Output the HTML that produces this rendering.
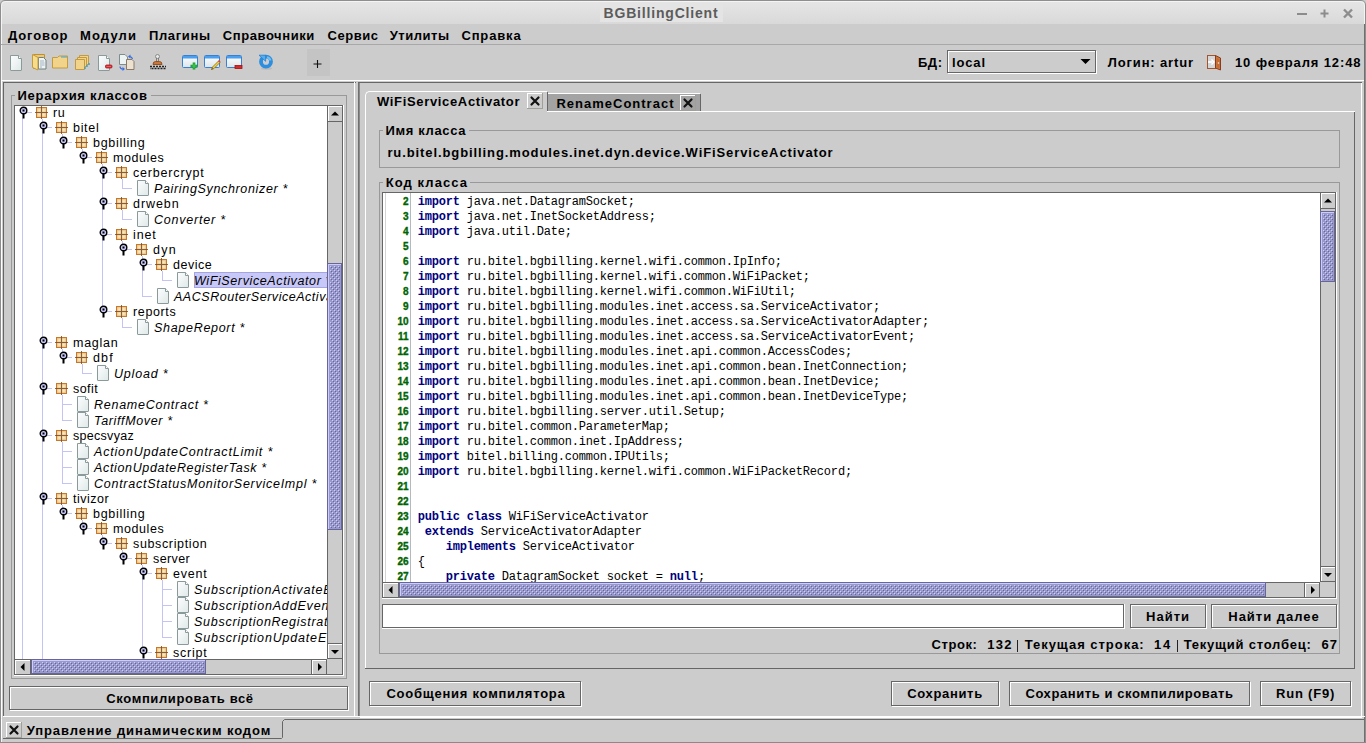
<!DOCTYPE html><html><head><meta charset="utf-8"><title>BGBillingClient</title><style>html,body{margin:0;padding:0;width:1366px;height:743px;overflow:hidden;background:#cccccc;}.a{position:absolute;display:block;}.t{white-space:pre;font-kerning:none;}svg.a{overflow:visible}</style></head><body><svg width="0" height="0" style="position:absolute"><defs><pattern id="bump" width="4" height="4" patternUnits="userSpaceOnUse"><rect x="0" y="0" width="1" height="1" fill="#ccccff"/><rect x="1" y="1" width="1" height="1" fill="#666699"/><rect x="2" y="2" width="1" height="1" fill="#ccccff"/><rect x="3" y="3" width="1" height="1" fill="#666699"/></pattern><linearGradient id="gdoc" x1="0" y1="0" x2="1" y2="1"><stop offset="0" stop-color="#fdfefe"/><stop offset="1" stop-color="#dfe8e8"/></linearGradient><radialGradient id="gpk"><stop offset="0" stop-color="#fdf0c0"/><stop offset="1" stop-color="#e8c690"/></radialGradient><linearGradient id="gwin" x1="0" y1="0" x2="0" y2="1"><stop offset="0" stop-color="#fff"/><stop offset="1" stop-color="#dde4ea"/></linearGradient></defs></svg><div class="a" style="left:0px;top:0px;width:1366px;height:743px;background:#cccccc;"></div>
<div class="a" style="left:0px;top:0px;width:1366px;height:24px;background:linear-gradient(#e6e6e6,#d9d9d9);border-radius:5px 5px 0 0;"></div>
<svg class="a" style="left:0;top:0" width="1366" height="743"><path d="M1.5 743V6Q1.5 1.5 6 1.5H1360Q1364.5 1.5 1364.5 6V743" stroke="#f4f4f4" fill="none"/><path d="M0.5 743V5Q0.5 0.5 5 0.5H1361Q1365.5 0.5 1365.5 5V743" stroke="#8e8e8e" fill="none"/></svg>
<div class="a" style="left:600px;top:4px;width:123px;height:18px;background:#e4e4e4;"></div>
<span id="t1" class="a t" style="top:3.65px;font:normal bold 14px/18px 'Liberation Sans', sans-serif;color:#5c5c5c;letter-spacing:0.816px;left:661px;transform:translateX(-50%);">BGBillingClient</span>
<svg class="a" style="left:1290px;top:6px" width="70" height="14"><path d="M7 8h10" stroke="#8c8c8c" stroke-width="2"/><path d="M34.5 3.5v8M30.5 7.5h8" stroke="#8c8c8c" stroke-width="2"/><path d="M54 3.5l8 8M62 3.5l-8 8" stroke="#8c8c8c" stroke-width="2.4"/></svg>
<div class="a" style="left:1px;top:44px;width:1364px;height:1px;background:#a8a8a8;"></div>
<span id="t2" class="a t" style="top:26.50px;font:normal bold 13px/17px 'Liberation Sans', sans-serif;color:#000;letter-spacing:0.875px;left:8px;">Договор</span>
<span id="t3" class="a t" style="top:26.50px;font:normal bold 13px/17px 'Liberation Sans', sans-serif;color:#000;letter-spacing:1.134px;left:80px;">Модули</span>
<span id="t4" class="a t" style="top:26.50px;font:normal bold 13px/17px 'Liberation Sans', sans-serif;color:#000;letter-spacing:0.633px;left:149px;">Плагины</span>
<span id="t5" class="a t" style="top:26.50px;font:normal bold 13px/17px 'Liberation Sans', sans-serif;color:#000;letter-spacing:0.575px;left:222.8px;">Справочники</span>
<span id="t6" class="a t" style="top:26.50px;font:normal bold 13px/17px 'Liberation Sans', sans-serif;color:#000;letter-spacing:0.504px;left:327.6px;">Сервис</span>
<span id="t7" class="a t" style="top:26.50px;font:normal bold 13px/17px 'Liberation Sans', sans-serif;color:#000;letter-spacing:0.521px;left:389.7px;">Утилиты</span>
<span id="t8" class="a t" style="top:26.50px;font:normal bold 13px/17px 'Liberation Sans', sans-serif;color:#000;letter-spacing:0.860px;left:461.4px;">Справка</span>
<svg class="a" style="left:6px;top:54px;" width="16" height="16" viewBox="0 0 16 16"><path d="M4.5 1.5h8l3 3v11.5q0 .5-.5.5h-10q-.5 0-.5-.5z" fill="url(#gdoc)" stroke="#8a9a9a" stroke-width="1"/><path d="M12.5 1.5v3h3" fill="#fff" stroke="#8a9a9a" stroke-width="1"/></svg>
<svg class="a" style="left:31px;top:54px;" width="16" height="16" viewBox="0 0 16 16"><path d="M2.5 0.5h11v14h-11z" fill="#efc870" stroke="#c09030"/><path d="M7.5 3.5h5l2.5 2.5v9h-7.5z" fill="#eef4f4" stroke="#6f8080"/><path d="M9 7h4M9 9h4.5M9 11h4.5M9 13h2" stroke="#9ab" stroke-width="0.9"/><path d="M1.5 0.5l5.5 3v12.5l-5.5 -2.5z" fill="#f6dc8c" stroke="#c39a3e"/></svg>
<svg class="a" style="left:52px;top:54px;" width="16" height="16" viewBox="0 0 16 16"><path d="M0.5 3.5h5l1.5 -1.5h8.5v12h-15z" fill="#f2d38a" stroke="#c39a3e"/><path d="M9 3h6" stroke="#3aa7e0" stroke-width="1"/></svg>
<svg class="a" style="left:74px;top:54px;" width="16" height="16" viewBox="0 0 16 16"><path d="M5.5 1.5h9v9h-9z" fill="#f2d38a" stroke="#c39a3e"/><path d="M3.5 3.5h9v9h-9z" fill="#f2d38a" stroke="#c39a3e"/><path d="M1.5 5.5h9v10h-9z" fill="#f2d38a" stroke="#c39a3e"/><path d="M11 13v2M13 11v2M15 9v2" stroke="#2a9fd8" stroke-width="1.3"/></svg>
<svg class="a" style="left:94px;top:54px;" width="16" height="16" viewBox="0 0 16 16"><path d="M4.5 1.5h8l3 3v11.5q0 .5-.5.5h-10q-.5 0-.5-.5z" fill="url(#gdoc)" stroke="#8a9a9a" stroke-width="1"/><path d="M12.5 1.5v3h3" fill="#fff" stroke="#8a9a9a" stroke-width="1"/><rect x="11.5" y="11" width="6.5" height="3" rx="1" fill="#d8303a" stroke="#a81820" stroke-width="0.8"/><path d="M12.5 12.5h4.5" stroke="#f08080" stroke-width="0.6"/></svg>
<svg class="a" style="left:118px;top:54px;" width="16" height="16" viewBox="0 0 16 16"><path d="M1.5 0.5h5.5l2.5 2.5v7.5h-8z" fill="#eef4f4" stroke="#7d8c8c"/><path d="M8.5 5.5h5.5l2 2v8h-7.5z" fill="#ece2d2" stroke="#8a7a68"/><path d="M11 2.5c1.5 0 3 0.5 3.5 2.5" stroke="#3a6ee0" fill="none" stroke-width="1.2"/><path d="M10 2.5l2.5 -2v4z" fill="#3a6ee0"/><path d="M2 12.5c0 1.5 1.5 2.5 3 2.5" stroke="#3a6ee0" fill="none" stroke-width="1.2"/><path d="M7 15l-2.5 -2v4z" fill="#3a6ee0"/></svg>
<svg class="a" style="left:150px;top:54px;" width="16" height="16" viewBox="0 0 16 16"><circle cx="7.5" cy="2.5" r="2" fill="#e8e8e8" stroke="#8a8a8a"/><path d="M6.5 4v3M8.5 4v3" stroke="#777" stroke-width="0.9"/><path d="M3 10.5q0-3 2.5-3h4q2.5 0 2.5 3z" fill="#c8763a" stroke="#8a4a1a" stroke-width="0.9"/><path d="M0 12.5h16" stroke="#222" stroke-width="1.3" stroke-dasharray="2 1"/><path d="M0 14.5h16" stroke="#222" stroke-width="1.3" stroke-dasharray="2 1" stroke-dashoffset="1.5"/></svg>
<svg class="a" style="left:182px;top:54px;" width="16" height="16" viewBox="0 0 16 16"><rect x="0.5" y="1.5" width="15" height="12" rx="1" fill="url(#gwin)" stroke="#3b7fd0"/><rect x="1" y="2" width="14" height="2.5" fill="#4aa0f0"/><path d="M12 8.5v7M8.5 12h7" stroke="#1f9a2a" stroke-width="2.6"/><path d="M12 9.5v5M9.5 12h5" stroke="#3cd048" stroke-width="1.2"/></svg>
<svg class="a" style="left:204px;top:54px;" width="16" height="16" viewBox="0 0 16 16"><rect x="0.5" y="1.5" width="15" height="12" rx="1" fill="url(#gwin)" stroke="#3b7fd0"/><rect x="1" y="2" width="14" height="2.5" fill="#4aa0f0"/><path d="M7.5 15.5l1-2.5 6-6 1.5 1.5-6 6z" fill="#f0d040" stroke="#7a6010" stroke-width="0.7"/><path d="M14.5 6.5l1.5 1.5" stroke="#e04040" stroke-width="1.6"/><path d="M7.5 15.5l0.6-1.2 0.6 0.6z" fill="#111"/></svg>
<svg class="a" style="left:226px;top:54px;" width="16" height="16" viewBox="0 0 16 16"><rect x="0.5" y="1.5" width="15" height="12" rx="1" fill="url(#gwin)" stroke="#3b7fd0"/><rect x="1" y="2" width="14" height="2.5" fill="#4aa0f0"/><rect x="9" y="11.5" width="7" height="3" fill="#d42a2a" stroke="#a01010" stroke-width="0.8"/></svg>
<svg class="a" style="left:258px;top:54px;" width="16" height="16" viewBox="0 0 16 16"><ellipse cx="8.5" cy="14.5" rx="5.5" ry="1.2" fill="#999" opacity="0.35"/><circle cx="8" cy="7.7" r="5" fill="none" stroke="#2b8ee0" stroke-width="3.8"/><path d="M9 3.2A4.6 4.6 0 0 1 12.5 6.5" fill="none" stroke="#8ccaf0" stroke-width="2" opacity="0.8"/><path d="M1 1.2h6.6v6.1z" fill="#52b0f0" stroke="#2a80d0" stroke-width="0.8"/></svg>
<div class="a" style="left:307px;top:49px;width:23px;height:27px;background:#c4c4c4;"></div>
<svg class="a" style="left:312px;top:58px" width="12" height="12"><path d="M5.5 2v8M1.5 6h8" stroke="#111" stroke-width="1.1"/></svg>
<span id="t9" class="a t" style="top:53.50px;font:normal bold 13px/17px 'Liberation Sans', sans-serif;color:#000;letter-spacing:0.531px;left:918px;">БД:</span>
<div class="a" style="left:947px;top:50px;width:150px;height:24px;background:#cccccc;"></div>
<div class="a" style="left:948px;top:51px;width:149px;height:1px;background:#ffffff;"></div>
<div class="a" style="left:948px;top:73px;width:149px;height:1px;background:#ffffff;"></div>
<div class="a" style="left:948px;top:51px;width:1px;height:23px;background:#ffffff;"></div>
<div class="a" style="left:1096px;top:51px;width:1px;height:23px;background:#ffffff;"></div>
<div class="a" style="left:947px;top:50px;width:149px;height:1px;background:#666666;"></div>
<div class="a" style="left:947px;top:72px;width:149px;height:1px;background:#666666;"></div>
<div class="a" style="left:947px;top:50px;width:1px;height:23px;background:#666666;"></div>
<div class="a" style="left:1095px;top:50px;width:1px;height:23px;background:#666666;"></div>
<span id="t10" class="a t" style="top:53.50px;font:normal bold 13px/17px 'Liberation Sans', sans-serif;color:#000;letter-spacing:0.844px;left:952px;">local</span>
<span id="t11" class="a t" style="top:53.50px;font:normal bold 13px/17px 'Liberation Sans', sans-serif;color:#000;letter-spacing:0.846px;left:1107.8px;">Логин: artur</span>
<svg class="a" style="left:1206px;top:54px;" width="16" height="16" viewBox="0 0 16 16"><rect x="1.5" y="1.5" width="8" height="13" fill="#d6d6d6" stroke="#a4532a"/><path d="M2 8h4.5" stroke="#fff" stroke-width="1.6"/><path d="M5.5 5.5l2.5 2.5-2.5 2.5" stroke="#fff" fill="none" stroke-width="1.4"/><path d="M9.5 1.5l5 2.5v12l-5-2z" fill="#d0783c" stroke="#8b3a1a"/><path d="M11.2 4v9.5M12.8 5v9" stroke="#b05a28" stroke-width="0.6"/><circle cx="12.5" cy="9" r="0.8" fill="#eee"/></svg>
<span id="t12" class="a t" style="top:53.50px;font:normal bold 13px/17px 'Liberation Sans', sans-serif;color:#000;letter-spacing:0.875px;left:1235px;">10 февраля 12:48</span>
<div class="a" style="left:1px;top:80px;width:1364px;height:1px;background:#ffffff;"></div>
<div class="a" style="left:3px;top:82px;width:353px;height:1px;background:#666666;"></div>
<div class="a" style="left:3px;top:82px;width:1px;height:635px;background:#666666;"></div>
<div class="a" style="left:3px;top:716px;width:352px;height:1px;background:#ffffff;"></div>
<div class="a" style="left:354px;top:82px;width:1px;height:635px;background:#ffffff;"></div>
<div class="a" style="left:1px;top:80px;width:1px;height:638px;background:#ffffff;"></div>
<div class="a" style="left:11px;top:95px;width:336px;height:1px;background:#999999;"></div>
<div class="a" style="left:11px;top:678px;width:336px;height:1px;background:#999999;"></div>
<div class="a" style="left:11px;top:95px;width:1px;height:584px;background:#999999;"></div>
<div class="a" style="left:346px;top:95px;width:1px;height:584px;background:#999999;"></div>
<div class="a" style="left:14.5px;top:94px;width:136.0px;height:3px;background:#cccccc;"></div>
<span id="t13" class="a t" style="top:86.50px;font:normal bold 13px/17px 'Liberation Sans', sans-serif;color:#000;letter-spacing:0.734px;left:17.5px;">Иерархия классов</span>
<div class="a" style="left:15px;top:106px;width:312px;height:553px;background:#ffffff;"></div>
<div class="a" style="left:15px;top:106px;width:312px;height:553px;overflow:hidden">
<svg class="a" style="left:-15px;top:-106px" width="400" height="700"><path d="M42.5 119V700 M27 112.5H32 M62.5 134V142 M47 127.5H52 M82.5 149V157 M67 142.5H72 M102.5 164V311 M87 157.5H92 M122.5 179V188.5 M107 172.5H112 M122 188.5H132 M122.5 210V219.5 M107 203.5H112 M122 219.5H132 M122.5 241V249 M107 234.5H112 M142.5 256V296.5 M127 249.5H132 M162.5 271V280.5 M147 264.5H152 M162 280.5H172 M142 296.5H152 M122.5 318V327.5 M107 311.5H112 M122 327.5H132 M62.5 349V357 M47 342.5H52 M82.5 364V373.5 M67 357.5H72 M82 373.5H92 M62.5 395V420.5 M47 388.5H52 M62 404.5H72 M62 420.5H72 M62.5 442V483.5 M47 435.5H52 M62 451.5H72 M62 467.5H72 M62 483.5H72 M62.5 505V513 M47 498.5H52 M82.5 520V528 M67 513.5H72 M102.5 535V543 M87 528.5H92 M122.5 550V558 M107 543.5H112 M142.5 565V652 M127 558.5H132 M162.5 580V637.5 M147 573.5H152 M162 589.5H172 M162 605.5H172 M162 621.5H172 M162 637.5H172 M162.5 659V700 M147 652.5H152 M22.5 118V700" stroke="#c4c4f4" stroke-width="1" fill="none"/></svg>
<svg class="a" style="left:4px;top:0px" width="9" height="14"><circle cx="4.5" cy="4.5" r="3.3" fill="#c8c8f8" stroke="#000" stroke-width="1.4"/><rect x="3.5" y="3.5" width="2" height="2" fill="#000"/><rect x="3.5" y="7.5" width="2" height="5" fill="#000"/></svg>
<svg class="a" style="left:18px;top:-2px" width="16" height="16"><rect x="3.5" y="3.5" width="10" height="10" fill="#efcf9c" stroke="#c8782a"/><rect x="4" y="4" width="4.5" height="4.5" fill="url(#gpk)"/><rect x="8.5" y="4" width="4.5" height="4.5" fill="url(#gpk)"/><rect x="4" y="8.5" width="4.5" height="4.5" fill="url(#gpk)"/><rect x="8.5" y="8.5" width="4.5" height="4.5" fill="url(#gpk)"/><path d="M8.5 2v13M2 8.5h13" stroke="#7a4a2a" stroke-width="1" opacity="0.85"/></svg>

<span id="t14" class="a t" style="top:-0.53px;font:normal normal 12.5px/16px 'Liberation Sans', sans-serif;color:#000;letter-spacing:0.675px;left:38px;">ru</span>
<svg class="a" style="left:24px;top:15px" width="9" height="14"><circle cx="4.5" cy="4.5" r="3.3" fill="#c8c8f8" stroke="#000" stroke-width="1.4"/><rect x="3.5" y="3.5" width="2" height="2" fill="#000"/><rect x="3.5" y="7.5" width="2" height="5" fill="#000"/></svg>
<svg class="a" style="left:38px;top:13px" width="16" height="16"><rect x="3.5" y="3.5" width="10" height="10" fill="#efcf9c" stroke="#c8782a"/><rect x="4" y="4" width="4.5" height="4.5" fill="url(#gpk)"/><rect x="8.5" y="4" width="4.5" height="4.5" fill="url(#gpk)"/><rect x="4" y="8.5" width="4.5" height="4.5" fill="url(#gpk)"/><rect x="8.5" y="8.5" width="4.5" height="4.5" fill="url(#gpk)"/><path d="M8.5 2v13M2 8.5h13" stroke="#7a4a2a" stroke-width="1" opacity="0.85"/></svg>

<span id="t15" class="a t" style="top:14.47px;font:normal normal 12.5px/16px 'Liberation Sans', sans-serif;color:#000;letter-spacing:0.691px;left:58px;">bitel</span>
<svg class="a" style="left:44px;top:30px" width="9" height="14"><circle cx="4.5" cy="4.5" r="3.3" fill="#c8c8f8" stroke="#000" stroke-width="1.4"/><rect x="3.5" y="3.5" width="2" height="2" fill="#000"/><rect x="3.5" y="7.5" width="2" height="5" fill="#000"/></svg>
<svg class="a" style="left:58px;top:28px" width="16" height="16"><rect x="3.5" y="3.5" width="10" height="10" fill="#efcf9c" stroke="#c8782a"/><rect x="4" y="4" width="4.5" height="4.5" fill="url(#gpk)"/><rect x="8.5" y="4" width="4.5" height="4.5" fill="url(#gpk)"/><rect x="4" y="8.5" width="4.5" height="4.5" fill="url(#gpk)"/><rect x="8.5" y="8.5" width="4.5" height="4.5" fill="url(#gpk)"/><path d="M8.5 2v13M2 8.5h13" stroke="#7a4a2a" stroke-width="1" opacity="0.85"/></svg>

<span id="t16" class="a t" style="top:29.47px;font:normal normal 12.5px/16px 'Liberation Sans', sans-serif;color:#000;letter-spacing:0.728px;left:78px;">bgbilling</span>
<svg class="a" style="left:64px;top:45px" width="9" height="14"><circle cx="4.5" cy="4.5" r="3.3" fill="#c8c8f8" stroke="#000" stroke-width="1.4"/><rect x="3.5" y="3.5" width="2" height="2" fill="#000"/><rect x="3.5" y="7.5" width="2" height="5" fill="#000"/></svg>
<svg class="a" style="left:78px;top:43px" width="16" height="16"><rect x="3.5" y="3.5" width="10" height="10" fill="#efcf9c" stroke="#c8782a"/><rect x="4" y="4" width="4.5" height="4.5" fill="url(#gpk)"/><rect x="8.5" y="4" width="4.5" height="4.5" fill="url(#gpk)"/><rect x="4" y="8.5" width="4.5" height="4.5" fill="url(#gpk)"/><rect x="8.5" y="8.5" width="4.5" height="4.5" fill="url(#gpk)"/><path d="M8.5 2v13M2 8.5h13" stroke="#7a4a2a" stroke-width="1" opacity="0.85"/></svg>

<span id="t17" class="a t" style="top:44.47px;font:normal normal 12.5px/16px 'Liberation Sans', sans-serif;color:#000;letter-spacing:0.575px;left:98px;">modules</span>
<svg class="a" style="left:84px;top:60px" width="9" height="14"><circle cx="4.5" cy="4.5" r="3.3" fill="#c8c8f8" stroke="#000" stroke-width="1.4"/><rect x="3.5" y="3.5" width="2" height="2" fill="#000"/><rect x="3.5" y="7.5" width="2" height="5" fill="#000"/></svg>
<svg class="a" style="left:98px;top:58px" width="16" height="16"><rect x="3.5" y="3.5" width="10" height="10" fill="#efcf9c" stroke="#c8782a"/><rect x="4" y="4" width="4.5" height="4.5" fill="url(#gpk)"/><rect x="8.5" y="4" width="4.5" height="4.5" fill="url(#gpk)"/><rect x="4" y="8.5" width="4.5" height="4.5" fill="url(#gpk)"/><rect x="8.5" y="8.5" width="4.5" height="4.5" fill="url(#gpk)"/><path d="M8.5 2v13M2 8.5h13" stroke="#7a4a2a" stroke-width="1" opacity="0.85"/></svg>

<span id="t18" class="a t" style="top:59.47px;font:normal normal 12.5px/16px 'Liberation Sans', sans-serif;color:#000;letter-spacing:0.817px;left:118px;">cerbercrypt</span>
<svg class="a" style="left:118px;top:73px" width="16" height="16"><path d="M4.5 1.5h8l3 3v11.5q0 .5-.5.5h-10q-.5 0-.5-.5z" fill="url(#gdoc)" stroke="#8a9a9a" stroke-width="1"/><path d="M12.5 1.5v3h3" fill="#fff" stroke="#8a9a9a" stroke-width="1"/></svg>
<span id="t19" class="a t" style="top:75.47px;font:italic normal 12.5px/16px 'Liberation Sans', sans-serif;color:#000;letter-spacing:0.658px;left:139px;">PairingSynchronizer *</span>
<svg class="a" style="left:84px;top:91px" width="9" height="14"><circle cx="4.5" cy="4.5" r="3.3" fill="#c8c8f8" stroke="#000" stroke-width="1.4"/><rect x="3.5" y="3.5" width="2" height="2" fill="#000"/><rect x="3.5" y="7.5" width="2" height="5" fill="#000"/></svg>
<svg class="a" style="left:98px;top:89px" width="16" height="16"><rect x="3.5" y="3.5" width="10" height="10" fill="#efcf9c" stroke="#c8782a"/><rect x="4" y="4" width="4.5" height="4.5" fill="url(#gpk)"/><rect x="8.5" y="4" width="4.5" height="4.5" fill="url(#gpk)"/><rect x="4" y="8.5" width="4.5" height="4.5" fill="url(#gpk)"/><rect x="8.5" y="8.5" width="4.5" height="4.5" fill="url(#gpk)"/><path d="M8.5 2v13M2 8.5h13" stroke="#7a4a2a" stroke-width="1" opacity="0.85"/></svg>

<span id="t20" class="a t" style="top:90.47px;font:normal normal 12.5px/16px 'Liberation Sans', sans-serif;color:#000;letter-spacing:0.940px;left:118px;">drwebn</span>
<svg class="a" style="left:118px;top:104px" width="16" height="16"><path d="M4.5 1.5h8l3 3v11.5q0 .5-.5.5h-10q-.5 0-.5-.5z" fill="url(#gdoc)" stroke="#8a9a9a" stroke-width="1"/><path d="M12.5 1.5v3h3" fill="#fff" stroke="#8a9a9a" stroke-width="1"/></svg>
<span id="t21" class="a t" style="top:106.47px;font:italic normal 12.5px/16px 'Liberation Sans', sans-serif;color:#000;letter-spacing:0.778px;left:139px;">Converter *</span>
<svg class="a" style="left:84px;top:122px" width="9" height="14"><circle cx="4.5" cy="4.5" r="3.3" fill="#c8c8f8" stroke="#000" stroke-width="1.4"/><rect x="3.5" y="3.5" width="2" height="2" fill="#000"/><rect x="3.5" y="7.5" width="2" height="5" fill="#000"/></svg>
<svg class="a" style="left:98px;top:120px" width="16" height="16"><rect x="3.5" y="3.5" width="10" height="10" fill="#efcf9c" stroke="#c8782a"/><rect x="4" y="4" width="4.5" height="4.5" fill="url(#gpk)"/><rect x="8.5" y="4" width="4.5" height="4.5" fill="url(#gpk)"/><rect x="4" y="8.5" width="4.5" height="4.5" fill="url(#gpk)"/><rect x="8.5" y="8.5" width="4.5" height="4.5" fill="url(#gpk)"/><path d="M8.5 2v13M2 8.5h13" stroke="#7a4a2a" stroke-width="1" opacity="0.85"/></svg>

<span id="t22" class="a t" style="top:121.47px;font:normal normal 12.5px/16px 'Liberation Sans', sans-serif;color:#000;letter-spacing:0.848px;left:118px;">inet</span>
<svg class="a" style="left:104px;top:137px" width="9" height="14"><circle cx="4.5" cy="4.5" r="3.3" fill="#c8c8f8" stroke="#000" stroke-width="1.4"/><rect x="3.5" y="3.5" width="2" height="2" fill="#000"/><rect x="3.5" y="7.5" width="2" height="5" fill="#000"/></svg>
<svg class="a" style="left:118px;top:135px" width="16" height="16"><rect x="3.5" y="3.5" width="10" height="10" fill="#efcf9c" stroke="#c8782a"/><rect x="4" y="4" width="4.5" height="4.5" fill="url(#gpk)"/><rect x="8.5" y="4" width="4.5" height="4.5" fill="url(#gpk)"/><rect x="4" y="8.5" width="4.5" height="4.5" fill="url(#gpk)"/><rect x="8.5" y="8.5" width="4.5" height="4.5" fill="url(#gpk)"/><path d="M8.5 2v13M2 8.5h13" stroke="#7a4a2a" stroke-width="1" opacity="0.85"/></svg>

<span id="t23" class="a t" style="top:136.47px;font:normal normal 12.5px/16px 'Liberation Sans', sans-serif;color:#000;letter-spacing:1.272px;left:138px;">dyn</span>
<svg class="a" style="left:124px;top:152px" width="9" height="14"><circle cx="4.5" cy="4.5" r="3.3" fill="#c8c8f8" stroke="#000" stroke-width="1.4"/><rect x="3.5" y="3.5" width="2" height="2" fill="#000"/><rect x="3.5" y="7.5" width="2" height="5" fill="#000"/></svg>
<svg class="a" style="left:138px;top:150px" width="16" height="16"><rect x="3.5" y="3.5" width="10" height="10" fill="#efcf9c" stroke="#c8782a"/><rect x="4" y="4" width="4.5" height="4.5" fill="url(#gpk)"/><rect x="8.5" y="4" width="4.5" height="4.5" fill="url(#gpk)"/><rect x="4" y="8.5" width="4.5" height="4.5" fill="url(#gpk)"/><rect x="8.5" y="8.5" width="4.5" height="4.5" fill="url(#gpk)"/><path d="M8.5 2v13M2 8.5h13" stroke="#7a4a2a" stroke-width="1" opacity="0.85"/></svg>

<span id="t24" class="a t" style="top:151.47px;font:normal normal 12.5px/16px 'Liberation Sans', sans-serif;color:#000;letter-spacing:0.512px;left:158px;">device</span>
<div class="a" style="left:179px;top:166px;width:137px;height:16px;background:#c8c8f8;"></div>
<div class="a" style="left:179px;top:166px;width:147px;height:1px;background:#a4a4e0;"></div>
<div class="a" style="left:179px;top:181px;width:147px;height:1px;background:#a4a4e0;"></div>
<div class="a" style="left:179px;top:166px;width:1px;height:16px;background:#a4a4e0;"></div>
<div class="a" style="left:325px;top:166px;width:1px;height:16px;background:#a4a4e0;"></div>
<svg class="a" style="left:158px;top:165px" width="16" height="16"><path d="M4.5 1.5h8l3 3v11.5q0 .5-.5.5h-10q-.5 0-.5-.5z" fill="url(#gdoc)" stroke="#8a9a9a" stroke-width="1"/><path d="M12.5 1.5v3h3" fill="#fff" stroke="#8a9a9a" stroke-width="1"/></svg>
<span id="t25" class="a t" style="top:167.47px;font:italic normal 12.5px/16px 'Liberation Sans', sans-serif;color:#000;letter-spacing:0.614px;left:179px;">WiFiServiceActivator *</span>
<svg class="a" style="left:138px;top:181px" width="16" height="16"><path d="M4.5 1.5h8l3 3v11.5q0 .5-.5.5h-10q-.5 0-.5-.5z" fill="url(#gdoc)" stroke="#8a9a9a" stroke-width="1"/><path d="M12.5 1.5v3h3" fill="#fff" stroke="#8a9a9a" stroke-width="1"/></svg>
<span id="t26" class="a t" style="top:183.47px;font:italic normal 12.5px/16px 'Liberation Sans', sans-serif;color:#000;letter-spacing:0.528px;left:159px;">AACSRouterServiceActivator *</span>
<svg class="a" style="left:84px;top:199px" width="9" height="14"><circle cx="4.5" cy="4.5" r="3.3" fill="#c8c8f8" stroke="#000" stroke-width="1.4"/><rect x="3.5" y="3.5" width="2" height="2" fill="#000"/><rect x="3.5" y="7.5" width="2" height="5" fill="#000"/></svg>
<svg class="a" style="left:98px;top:197px" width="16" height="16"><rect x="3.5" y="3.5" width="10" height="10" fill="#efcf9c" stroke="#c8782a"/><rect x="4" y="4" width="4.5" height="4.5" fill="url(#gpk)"/><rect x="8.5" y="4" width="4.5" height="4.5" fill="url(#gpk)"/><rect x="4" y="8.5" width="4.5" height="4.5" fill="url(#gpk)"/><rect x="8.5" y="8.5" width="4.5" height="4.5" fill="url(#gpk)"/><path d="M8.5 2v13M2 8.5h13" stroke="#7a4a2a" stroke-width="1" opacity="0.85"/></svg>

<span id="t27" class="a t" style="top:198.47px;font:normal normal 12.5px/16px 'Liberation Sans', sans-serif;color:#000;letter-spacing:0.632px;left:118px;">reports</span>
<svg class="a" style="left:118px;top:212px" width="16" height="16"><path d="M4.5 1.5h8l3 3v11.5q0 .5-.5.5h-10q-.5 0-.5-.5z" fill="url(#gdoc)" stroke="#8a9a9a" stroke-width="1"/><path d="M12.5 1.5v3h3" fill="#fff" stroke="#8a9a9a" stroke-width="1"/></svg>
<span id="t28" class="a t" style="top:214.47px;font:italic normal 12.5px/16px 'Liberation Sans', sans-serif;color:#000;letter-spacing:0.702px;left:139px;">ShapeReport *</span>
<svg class="a" style="left:24px;top:230px" width="9" height="14"><circle cx="4.5" cy="4.5" r="3.3" fill="#c8c8f8" stroke="#000" stroke-width="1.4"/><rect x="3.5" y="3.5" width="2" height="2" fill="#000"/><rect x="3.5" y="7.5" width="2" height="5" fill="#000"/></svg>
<svg class="a" style="left:38px;top:228px" width="16" height="16"><rect x="3.5" y="3.5" width="10" height="10" fill="#efcf9c" stroke="#c8782a"/><rect x="4" y="4" width="4.5" height="4.5" fill="url(#gpk)"/><rect x="8.5" y="4" width="4.5" height="4.5" fill="url(#gpk)"/><rect x="4" y="8.5" width="4.5" height="4.5" fill="url(#gpk)"/><rect x="8.5" y="8.5" width="4.5" height="4.5" fill="url(#gpk)"/><path d="M8.5 2v13M2 8.5h13" stroke="#7a4a2a" stroke-width="1" opacity="0.85"/></svg>

<span id="t29" class="a t" style="top:229.47px;font:normal normal 12.5px/16px 'Liberation Sans', sans-serif;color:#000;letter-spacing:0.740px;left:58px;">maglan</span>
<svg class="a" style="left:44px;top:245px" width="9" height="14"><circle cx="4.5" cy="4.5" r="3.3" fill="#c8c8f8" stroke="#000" stroke-width="1.4"/><rect x="3.5" y="3.5" width="2" height="2" fill="#000"/><rect x="3.5" y="7.5" width="2" height="5" fill="#000"/></svg>
<svg class="a" style="left:58px;top:243px" width="16" height="16"><rect x="3.5" y="3.5" width="10" height="10" fill="#efcf9c" stroke="#c8782a"/><rect x="4" y="4" width="4.5" height="4.5" fill="url(#gpk)"/><rect x="8.5" y="4" width="4.5" height="4.5" fill="url(#gpk)"/><rect x="4" y="8.5" width="4.5" height="4.5" fill="url(#gpk)"/><rect x="8.5" y="8.5" width="4.5" height="4.5" fill="url(#gpk)"/><path d="M8.5 2v13M2 8.5h13" stroke="#7a4a2a" stroke-width="1" opacity="0.85"/></svg>

<span id="t30" class="a t" style="top:244.47px;font:normal normal 12.5px/16px 'Liberation Sans', sans-serif;color:#000;letter-spacing:1.155px;left:78px;">dbf</span>
<svg class="a" style="left:78px;top:258px" width="16" height="16"><path d="M4.5 1.5h8l3 3v11.5q0 .5-.5.5h-10q-.5 0-.5-.5z" fill="url(#gdoc)" stroke="#8a9a9a" stroke-width="1"/><path d="M12.5 1.5v3h3" fill="#fff" stroke="#8a9a9a" stroke-width="1"/></svg>
<span id="t31" class="a t" style="top:260.47px;font:italic normal 12.5px/16px 'Liberation Sans', sans-serif;color:#000;letter-spacing:0.813px;left:99px;">Upload *</span>
<svg class="a" style="left:24px;top:276px" width="9" height="14"><circle cx="4.5" cy="4.5" r="3.3" fill="#c8c8f8" stroke="#000" stroke-width="1.4"/><rect x="3.5" y="3.5" width="2" height="2" fill="#000"/><rect x="3.5" y="7.5" width="2" height="5" fill="#000"/></svg>
<svg class="a" style="left:38px;top:274px" width="16" height="16"><rect x="3.5" y="3.5" width="10" height="10" fill="#efcf9c" stroke="#c8782a"/><rect x="4" y="4" width="4.5" height="4.5" fill="url(#gpk)"/><rect x="8.5" y="4" width="4.5" height="4.5" fill="url(#gpk)"/><rect x="4" y="8.5" width="4.5" height="4.5" fill="url(#gpk)"/><rect x="8.5" y="8.5" width="4.5" height="4.5" fill="url(#gpk)"/><path d="M8.5 2v13M2 8.5h13" stroke="#7a4a2a" stroke-width="1" opacity="0.85"/></svg>

<span id="t32" class="a t" style="top:275.47px;font:normal normal 12.5px/16px 'Liberation Sans', sans-serif;color:#000;letter-spacing:0.441px;left:58px;">sofit</span>
<svg class="a" style="left:58px;top:289px" width="16" height="16"><path d="M4.5 1.5h8l3 3v11.5q0 .5-.5.5h-10q-.5 0-.5-.5z" fill="url(#gdoc)" stroke="#8a9a9a" stroke-width="1"/><path d="M12.5 1.5v3h3" fill="#fff" stroke="#8a9a9a" stroke-width="1"/></svg>
<span id="t33" class="a t" style="top:291.47px;font:italic normal 12.5px/16px 'Liberation Sans', sans-serif;color:#000;letter-spacing:0.741px;left:79px;">RenameContract *</span>
<svg class="a" style="left:58px;top:305px" width="16" height="16"><path d="M4.5 1.5h8l3 3v11.5q0 .5-.5.5h-10q-.5 0-.5-.5z" fill="url(#gdoc)" stroke="#8a9a9a" stroke-width="1"/><path d="M12.5 1.5v3h3" fill="#fff" stroke="#8a9a9a" stroke-width="1"/></svg>
<span id="t34" class="a t" style="top:307.47px;font:italic normal 12.5px/16px 'Liberation Sans', sans-serif;color:#000;letter-spacing:0.647px;left:79px;">TariffMover *</span>
<svg class="a" style="left:24px;top:323px" width="9" height="14"><circle cx="4.5" cy="4.5" r="3.3" fill="#c8c8f8" stroke="#000" stroke-width="1.4"/><rect x="3.5" y="3.5" width="2" height="2" fill="#000"/><rect x="3.5" y="7.5" width="2" height="5" fill="#000"/></svg>
<svg class="a" style="left:38px;top:321px" width="16" height="16"><rect x="3.5" y="3.5" width="10" height="10" fill="#efcf9c" stroke="#c8782a"/><rect x="4" y="4" width="4.5" height="4.5" fill="url(#gpk)"/><rect x="8.5" y="4" width="4.5" height="4.5" fill="url(#gpk)"/><rect x="4" y="8.5" width="4.5" height="4.5" fill="url(#gpk)"/><rect x="8.5" y="8.5" width="4.5" height="4.5" fill="url(#gpk)"/><path d="M8.5 2v13M2 8.5h13" stroke="#7a4a2a" stroke-width="1" opacity="0.85"/></svg>

<span id="t35" class="a t" style="top:322.47px;font:normal normal 12.5px/16px 'Liberation Sans', sans-serif;color:#000;letter-spacing:0.293px;left:58px;">specsvyaz</span>
<svg class="a" style="left:58px;top:336px" width="16" height="16"><path d="M4.5 1.5h8l3 3v11.5q0 .5-.5.5h-10q-.5 0-.5-.5z" fill="url(#gdoc)" stroke="#8a9a9a" stroke-width="1"/><path d="M12.5 1.5v3h3" fill="#fff" stroke="#8a9a9a" stroke-width="1"/></svg>
<span id="t36" class="a t" style="top:338.47px;font:italic normal 12.5px/16px 'Liberation Sans', sans-serif;color:#000;letter-spacing:0.819px;left:79px;">ActionUpdateContractLimit *</span>
<svg class="a" style="left:58px;top:352px" width="16" height="16"><path d="M4.5 1.5h8l3 3v11.5q0 .5-.5.5h-10q-.5 0-.5-.5z" fill="url(#gdoc)" stroke="#8a9a9a" stroke-width="1"/><path d="M12.5 1.5v3h3" fill="#fff" stroke="#8a9a9a" stroke-width="1"/></svg>
<span id="t37" class="a t" style="top:354.47px;font:italic normal 12.5px/16px 'Liberation Sans', sans-serif;color:#000;letter-spacing:0.653px;left:79px;">ActionUpdateRegisterTask *</span>
<svg class="a" style="left:58px;top:368px" width="16" height="16"><path d="M4.5 1.5h8l3 3v11.5q0 .5-.5.5h-10q-.5 0-.5-.5z" fill="url(#gdoc)" stroke="#8a9a9a" stroke-width="1"/><path d="M12.5 1.5v3h3" fill="#fff" stroke="#8a9a9a" stroke-width="1"/></svg>
<span id="t38" class="a t" style="top:370.47px;font:italic normal 12.5px/16px 'Liberation Sans', sans-serif;color:#000;letter-spacing:0.736px;left:79px;">ContractStatusMonitorServiceImpl *</span>
<svg class="a" style="left:24px;top:386px" width="9" height="14"><circle cx="4.5" cy="4.5" r="3.3" fill="#c8c8f8" stroke="#000" stroke-width="1.4"/><rect x="3.5" y="3.5" width="2" height="2" fill="#000"/><rect x="3.5" y="7.5" width="2" height="5" fill="#000"/></svg>
<svg class="a" style="left:38px;top:384px" width="16" height="16"><rect x="3.5" y="3.5" width="10" height="10" fill="#efcf9c" stroke="#c8782a"/><rect x="4" y="4" width="4.5" height="4.5" fill="url(#gpk)"/><rect x="8.5" y="4" width="4.5" height="4.5" fill="url(#gpk)"/><rect x="4" y="8.5" width="4.5" height="4.5" fill="url(#gpk)"/><rect x="8.5" y="8.5" width="4.5" height="4.5" fill="url(#gpk)"/><path d="M8.5 2v13M2 8.5h13" stroke="#7a4a2a" stroke-width="1" opacity="0.85"/></svg>

<span id="t39" class="a t" style="top:385.47px;font:normal normal 12.5px/16px 'Liberation Sans', sans-serif;color:#000;letter-spacing:0.507px;left:58px;">tivizor</span>
<svg class="a" style="left:44px;top:401px" width="9" height="14"><circle cx="4.5" cy="4.5" r="3.3" fill="#c8c8f8" stroke="#000" stroke-width="1.4"/><rect x="3.5" y="3.5" width="2" height="2" fill="#000"/><rect x="3.5" y="7.5" width="2" height="5" fill="#000"/></svg>
<svg class="a" style="left:58px;top:399px" width="16" height="16"><rect x="3.5" y="3.5" width="10" height="10" fill="#efcf9c" stroke="#c8782a"/><rect x="4" y="4" width="4.5" height="4.5" fill="url(#gpk)"/><rect x="8.5" y="4" width="4.5" height="4.5" fill="url(#gpk)"/><rect x="4" y="8.5" width="4.5" height="4.5" fill="url(#gpk)"/><rect x="8.5" y="8.5" width="4.5" height="4.5" fill="url(#gpk)"/><path d="M8.5 2v13M2 8.5h13" stroke="#7a4a2a" stroke-width="1" opacity="0.85"/></svg>

<span id="t40" class="a t" style="top:400.47px;font:normal normal 12.5px/16px 'Liberation Sans', sans-serif;color:#000;letter-spacing:0.728px;left:78px;">bgbilling</span>
<svg class="a" style="left:64px;top:416px" width="9" height="14"><circle cx="4.5" cy="4.5" r="3.3" fill="#c8c8f8" stroke="#000" stroke-width="1.4"/><rect x="3.5" y="3.5" width="2" height="2" fill="#000"/><rect x="3.5" y="7.5" width="2" height="5" fill="#000"/></svg>
<svg class="a" style="left:78px;top:414px" width="16" height="16"><rect x="3.5" y="3.5" width="10" height="10" fill="#efcf9c" stroke="#c8782a"/><rect x="4" y="4" width="4.5" height="4.5" fill="url(#gpk)"/><rect x="8.5" y="4" width="4.5" height="4.5" fill="url(#gpk)"/><rect x="4" y="8.5" width="4.5" height="4.5" fill="url(#gpk)"/><rect x="8.5" y="8.5" width="4.5" height="4.5" fill="url(#gpk)"/><path d="M8.5 2v13M2 8.5h13" stroke="#7a4a2a" stroke-width="1" opacity="0.85"/></svg>

<span id="t41" class="a t" style="top:415.47px;font:normal normal 12.5px/16px 'Liberation Sans', sans-serif;color:#000;letter-spacing:0.575px;left:98px;">modules</span>
<svg class="a" style="left:84px;top:431px" width="9" height="14"><circle cx="4.5" cy="4.5" r="3.3" fill="#c8c8f8" stroke="#000" stroke-width="1.4"/><rect x="3.5" y="3.5" width="2" height="2" fill="#000"/><rect x="3.5" y="7.5" width="2" height="5" fill="#000"/></svg>
<svg class="a" style="left:98px;top:429px" width="16" height="16"><rect x="3.5" y="3.5" width="10" height="10" fill="#efcf9c" stroke="#c8782a"/><rect x="4" y="4" width="4.5" height="4.5" fill="url(#gpk)"/><rect x="8.5" y="4" width="4.5" height="4.5" fill="url(#gpk)"/><rect x="4" y="8.5" width="4.5" height="4.5" fill="url(#gpk)"/><rect x="8.5" y="8.5" width="4.5" height="4.5" fill="url(#gpk)"/><path d="M8.5 2v13M2 8.5h13" stroke="#7a4a2a" stroke-width="1" opacity="0.85"/></svg>

<span id="t42" class="a t" style="top:430.47px;font:normal normal 12.5px/16px 'Liberation Sans', sans-serif;color:#000;letter-spacing:0.636px;left:118px;">subscription</span>
<svg class="a" style="left:104px;top:446px" width="9" height="14"><circle cx="4.5" cy="4.5" r="3.3" fill="#c8c8f8" stroke="#000" stroke-width="1.4"/><rect x="3.5" y="3.5" width="2" height="2" fill="#000"/><rect x="3.5" y="7.5" width="2" height="5" fill="#000"/></svg>
<svg class="a" style="left:118px;top:444px" width="16" height="16"><rect x="3.5" y="3.5" width="10" height="10" fill="#efcf9c" stroke="#c8782a"/><rect x="4" y="4" width="4.5" height="4.5" fill="url(#gpk)"/><rect x="8.5" y="4" width="4.5" height="4.5" fill="url(#gpk)"/><rect x="4" y="8.5" width="4.5" height="4.5" fill="url(#gpk)"/><rect x="8.5" y="8.5" width="4.5" height="4.5" fill="url(#gpk)"/><path d="M8.5 2v13M2 8.5h13" stroke="#7a4a2a" stroke-width="1" opacity="0.85"/></svg>

<span id="t43" class="a t" style="top:445.47px;font:normal normal 12.5px/16px 'Liberation Sans', sans-serif;color:#000;letter-spacing:0.393px;left:138px;">server</span>
<svg class="a" style="left:124px;top:461px" width="9" height="14"><circle cx="4.5" cy="4.5" r="3.3" fill="#c8c8f8" stroke="#000" stroke-width="1.4"/><rect x="3.5" y="3.5" width="2" height="2" fill="#000"/><rect x="3.5" y="7.5" width="2" height="5" fill="#000"/></svg>
<svg class="a" style="left:138px;top:459px" width="16" height="16"><rect x="3.5" y="3.5" width="10" height="10" fill="#efcf9c" stroke="#c8782a"/><rect x="4" y="4" width="4.5" height="4.5" fill="url(#gpk)"/><rect x="8.5" y="4" width="4.5" height="4.5" fill="url(#gpk)"/><rect x="4" y="8.5" width="4.5" height="4.5" fill="url(#gpk)"/><rect x="8.5" y="8.5" width="4.5" height="4.5" fill="url(#gpk)"/><path d="M8.5 2v13M2 8.5h13" stroke="#7a4a2a" stroke-width="1" opacity="0.85"/></svg>

<span id="t44" class="a t" style="top:460.47px;font:normal normal 12.5px/16px 'Liberation Sans', sans-serif;color:#000;letter-spacing:0.777px;left:158px;">event</span>
<svg class="a" style="left:158px;top:474px" width="16" height="16"><path d="M4.5 1.5h8l3 3v11.5q0 .5-.5.5h-10q-.5 0-.5-.5z" fill="url(#gdoc)" stroke="#8a9a9a" stroke-width="1"/><path d="M12.5 1.5v3h3" fill="#fff" stroke="#8a9a9a" stroke-width="1"/></svg>
<span id="t45" class="a t" style="top:476.47px;font:italic normal 12.5px/16px 'Liberation Sans', sans-serif;color:#000;letter-spacing:0.795px;left:179px;">SubscriptionActivateEvent *</span>
<svg class="a" style="left:158px;top:490px" width="16" height="16"><path d="M4.5 1.5h8l3 3v11.5q0 .5-.5.5h-10q-.5 0-.5-.5z" fill="url(#gdoc)" stroke="#8a9a9a" stroke-width="1"/><path d="M12.5 1.5v3h3" fill="#fff" stroke="#8a9a9a" stroke-width="1"/></svg>
<span id="t46" class="a t" style="top:492.47px;font:italic normal 12.5px/16px 'Liberation Sans', sans-serif;color:#000;letter-spacing:0.826px;left:179px;">SubscriptionAddEvent *</span>
<svg class="a" style="left:158px;top:506px" width="16" height="16"><path d="M4.5 1.5h8l3 3v11.5q0 .5-.5.5h-10q-.5 0-.5-.5z" fill="url(#gdoc)" stroke="#8a9a9a" stroke-width="1"/><path d="M12.5 1.5v3h3" fill="#fff" stroke="#8a9a9a" stroke-width="1"/></svg>
<span id="t47" class="a t" style="top:508.47px;font:italic normal 12.5px/16px 'Liberation Sans', sans-serif;color:#000;letter-spacing:0.732px;left:179px;">SubscriptionRegistrationEvent *</span>
<svg class="a" style="left:158px;top:522px" width="16" height="16"><path d="M4.5 1.5h8l3 3v11.5q0 .5-.5.5h-10q-.5 0-.5-.5z" fill="url(#gdoc)" stroke="#8a9a9a" stroke-width="1"/><path d="M12.5 1.5v3h3" fill="#fff" stroke="#8a9a9a" stroke-width="1"/></svg>
<span id="t48" class="a t" style="top:524.47px;font:italic normal 12.5px/16px 'Liberation Sans', sans-serif;color:#000;letter-spacing:0.822px;left:179px;">SubscriptionUpdateEvent *</span>
<svg class="a" style="left:124px;top:540px" width="9" height="14"><circle cx="4.5" cy="4.5" r="3.3" fill="#c8c8f8" stroke="#000" stroke-width="1.4"/><rect x="3.5" y="3.5" width="2" height="2" fill="#000"/><rect x="3.5" y="7.5" width="2" height="5" fill="#000"/></svg>
<svg class="a" style="left:138px;top:538px" width="16" height="16"><rect x="3.5" y="3.5" width="10" height="10" fill="#efcf9c" stroke="#c8782a"/><rect x="4" y="4" width="4.5" height="4.5" fill="url(#gpk)"/><rect x="8.5" y="4" width="4.5" height="4.5" fill="url(#gpk)"/><rect x="4" y="8.5" width="4.5" height="4.5" fill="url(#gpk)"/><rect x="8.5" y="8.5" width="4.5" height="4.5" fill="url(#gpk)"/><path d="M8.5 2v13M2 8.5h13" stroke="#7a4a2a" stroke-width="1" opacity="0.85"/></svg>

<span id="t49" class="a t" style="top:539.47px;font:normal normal 12.5px/16px 'Liberation Sans', sans-serif;color:#000;letter-spacing:0.765px;left:158px;">script</span>
</div>
<div class="a" style="left:328px;top:106px;width:14px;height:553px;background:#cccccc;"></div>
<div class="a" style="left:327px;top:106px;width:1px;height:553px;background:#666666;"></div>
<div class="a" style="left:328px;top:106px;width:14px;height:1px;background:#ffffff;"></div>
<div class="a" style="left:328px;top:106px;width:1px;height:15px;background:#ffffff;"></div>
<div class="a" style="left:328px;top:121px;width:14px;height:1px;background:#666666;"></div>
<div class="a" style="left:328px;top:643px;width:14px;height:1px;background:#666666;"></div>
<div class="a" style="left:328px;top:644px;width:14px;height:1px;background:#ffffff;"></div>
<div class="a" style="left:328px;top:644px;width:1px;height:14px;background:#ffffff;"></div>
<div class="a" style="left:327px;top:658px;width:15px;height:1px;background:#666666;"></div>
<div class="a" style="left:327px;top:263px;width:15px;height:267px;background:#9999cc;"></div>
<div class="a" style="left:327px;top:263px;width:15px;height:1px;background:#666699;"></div>
<div class="a" style="left:327px;top:529px;width:15px;height:1px;background:#666699;"></div>
<div class="a" style="left:327px;top:263px;width:1px;height:267px;background:#666699;"></div>
<div class="a" style="left:341px;top:263px;width:1px;height:267px;background:#666699;"></div>
<div class="a" style="left:328px;top:264px;width:13px;height:1px;background:#ccccff;"></div>
<div class="a" style="left:328px;top:264px;width:1px;height:265px;background:#ccccff;"></div>
<svg class="a" style="left:330px;top:266px" width="10" height="262"><rect width="100%" height="100%" fill="url(#bump)"/></svg>
<div class="a" style="left:15px;top:660px;width:312px;height:14px;background:#cccccc;"></div>
<div class="a" style="left:15px;top:659px;width:312px;height:1px;background:#666666;"></div>
<div class="a" style="left:15px;top:660px;width:1px;height:14px;background:#ffffff;"></div>
<div class="a" style="left:15px;top:660px;width:15px;height:1px;background:#ffffff;"></div>
<div class="a" style="left:30px;top:660px;width:1px;height:14px;background:#666666;"></div>
<div class="a" style="left:311px;top:660px;width:1px;height:14px;background:#666666;"></div>
<div class="a" style="left:312px;top:660px;width:1px;height:14px;background:#ffffff;"></div>
<div class="a" style="left:312px;top:660px;width:14px;height:1px;background:#ffffff;"></div>
<div class="a" style="left:326px;top:659px;width:1px;height:15px;background:#666666;"></div>
<div class="a" style="left:31px;top:659px;width:175px;height:15px;background:#9999cc;"></div>
<div class="a" style="left:31px;top:659px;width:175px;height:1px;background:#666699;"></div>
<div class="a" style="left:31px;top:673px;width:175px;height:1px;background:#666699;"></div>
<div class="a" style="left:31px;top:659px;width:1px;height:15px;background:#666699;"></div>
<div class="a" style="left:205px;top:659px;width:1px;height:15px;background:#666699;"></div>
<div class="a" style="left:32px;top:660px;width:173px;height:1px;background:#ccccff;"></div>
<div class="a" style="left:32px;top:660px;width:1px;height:13px;background:#ccccff;"></div>
<svg class="a" style="left:34px;top:662px" width="170" height="10"><rect width="100%" height="100%" fill="url(#bump)"/></svg>
<div class="a" style="left:327px;top:659px;width:15px;height:15px;background:#cccccc;"></div>
<div class="a" style="left:14px;top:675px;width:330px;height:1px;background:#ffffff;"></div>
<div class="a" style="left:343px;top:105px;width:1px;height:571px;background:#ffffff;"></div>
<div class="a" style="left:14px;top:105px;width:329px;height:1px;background:#666666;"></div>
<div class="a" style="left:14px;top:674px;width:329px;height:1px;background:#666666;"></div>
<div class="a" style="left:14px;top:105px;width:1px;height:570px;background:#666666;"></div>
<div class="a" style="left:342px;top:105px;width:1px;height:570px;background:#666666;"></div>
<div class="a" style="left:9px;top:686px;width:340px;height:25px;background:#cccccc;"></div>
<div class="a" style="left:10px;top:687px;width:339px;height:1px;background:#ffffff;"></div>
<div class="a" style="left:10px;top:710px;width:339px;height:1px;background:#ffffff;"></div>
<div class="a" style="left:10px;top:687px;width:1px;height:24px;background:#ffffff;"></div>
<div class="a" style="left:348px;top:687px;width:1px;height:24px;background:#ffffff;"></div>
<div class="a" style="left:9px;top:686px;width:339px;height:1px;background:#666666;"></div>
<div class="a" style="left:9px;top:709px;width:339px;height:1px;background:#666666;"></div>
<div class="a" style="left:9px;top:686px;width:1px;height:24px;background:#666666;"></div>
<div class="a" style="left:347px;top:686px;width:1px;height:24px;background:#666666;"></div>
<span id="t50" class="a t" style="top:689.50px;font:normal bold 13px/17px 'Liberation Sans', sans-serif;color:#000;letter-spacing:0.622px;left:180.0px;transform:translateX(-50%);">Скомпилировать всё</span>
<div class="a" style="left:358px;top:82px;width:1px;height:635px;background:#707070;"></div>
<div class="a" style="left:359px;top:82px;width:1px;height:635px;background:#8a8a8a;"></div>
<div class="a" style="left:358px;top:82px;width:1004px;height:1px;background:#666666;"></div>
<div class="a" style="left:1361px;top:83px;width:1px;height:635px;background:#ffffff;"></div>
<div class="a" style="left:360px;top:717px;width:1002px;height:1px;background:#ffffff;"></div>
<div class="a" style="left:1364px;top:24px;width:1px;height:719px;background:#707070;"></div>
<div class="a" style="left:700px;top:111px;width:655px;height:1px;background:#ffffff;"></div>
<div class="a" style="left:365px;top:95px;width:1px;height:574px;background:#ffffff;"></div>
<div class="a" style="left:1354px;top:111px;width:1px;height:558px;background:#666666;"></div>
<div class="a" style="left:365px;top:668px;width:990px;height:1px;background:#666666;"></div>
<div class="a" style="left:365px;top:91px;width:182px;height:40px;border-top:1px solid #fff;border-left:1px solid #fff;border-top-left-radius:5px;box-sizing:border-box"></div>
<span id="t51" class="a t" style="top:92.50px;font:normal bold 13px/17px 'Liberation Sans', sans-serif;color:#000;letter-spacing:0.661px;left:377px;">WiFiServiceActivator</span>
<div class="a" style="left:527px;top:93px;width:16px;height:16px;background:#cccccc;"></div>
<div class="a" style="left:527px;top:93px;width:16px;height:1px;background:#ffffff;"></div>
<div class="a" style="left:527px;top:93px;width:1px;height:16px;background:#ffffff;"></div>
<div class="a" style="left:527px;top:108px;width:16px;height:1px;background:#a0a098;"></div>
<div class="a" style="left:542px;top:93px;width:1px;height:16px;background:#a0a098;"></div>
<svg class="a" style="left:530.0px;top:96.0px" width="10" height="10"><path d="M1.5 1.5l7 7M8.5 1.5l-7 7" stroke="#111" stroke-width="2.2" stroke-linecap="round"/></svg>
<div class="a" style="left:548px;top:94px;width:152px;height:17px;background:#a3a3a3;"></div>
<div class="a" style="left:548px;top:93px;width:152px;height:1px;background:#ffffff;"></div>
<div class="a" style="left:547px;top:92px;width:1px;height:19px;background:#666666;"></div>
<div class="a" style="left:700px;top:94px;width:1px;height:17px;background:#666666;"></div>
<div class="a" style="left:547px;top:111px;width:808px;height:1px;background:#ffffff;"></div>
<span id="t52" class="a t" style="top:94.50px;font:normal bold 13px/17px 'Liberation Sans', sans-serif;color:#000;letter-spacing:1.005px;left:556.4px;">RenameContract</span>
<div class="a" style="left:680px;top:95px;width:16px;height:16px;background:#a3a3a3;"></div>
<div class="a" style="left:680px;top:95px;width:16px;height:1px;background:#ffffff;"></div>
<div class="a" style="left:680px;top:95px;width:1px;height:16px;background:#ffffff;"></div>
<div class="a" style="left:680px;top:110px;width:16px;height:1px;background:#a0a098;"></div>
<div class="a" style="left:695px;top:95px;width:1px;height:16px;background:#a0a098;"></div>
<svg class="a" style="left:683.0px;top:98.0px" width="10" height="10"><path d="M1.5 1.5l7 7M8.5 1.5l-7 7" stroke="#111" stroke-width="2.2" stroke-linecap="round"/></svg>
<div class="a" style="left:379px;top:130px;width:961px;height:1px;background:#999999;"></div>
<div class="a" style="left:379px;top:167px;width:961px;height:1px;background:#999999;"></div>
<div class="a" style="left:379px;top:130px;width:1px;height:38px;background:#999999;"></div>
<div class="a" style="left:1339px;top:130px;width:1px;height:38px;background:#999999;"></div>
<div class="a" style="left:382.5px;top:129px;width:86.39999999999998px;height:3px;background:#cccccc;"></div>
<span id="t53" class="a t" style="top:121.50px;font:normal bold 13px/17px 'Liberation Sans', sans-serif;color:#000;letter-spacing:0.636px;left:385.5px;">Имя класса</span>
<span id="t54" class="a t" style="top:143.70px;font:normal bold 13px/17px 'Liberation Sans', sans-serif;color:#000;letter-spacing:0.904px;left:387.4px;">ru.bitel.bgbilling.modules.inet.dyn.device.WiFiServiceActivator</span>
<div class="a" style="left:379px;top:182px;width:961px;height:1px;background:#999999;"></div>
<div class="a" style="left:379px;top:653px;width:961px;height:1px;background:#999999;"></div>
<div class="a" style="left:379px;top:182px;width:1px;height:472px;background:#999999;"></div>
<div class="a" style="left:1339px;top:182px;width:1px;height:472px;background:#999999;"></div>
<div class="a" style="left:382.8px;top:181px;width:87.59999999999997px;height:3px;background:#cccccc;"></div>
<span id="t55" class="a t" style="top:173.70px;font:normal bold 13px/17px 'Liberation Sans', sans-serif;color:#000;letter-spacing:1.058px;left:385.8px;">Код класса</span>
<div class="a" style="left:383px;top:193px;width:937px;height:389px;background:#ffffff;"></div>
<div class="a" style="left:385px;top:193px;width:1px;height:389px;background:#d4d4d4;"></div>
<div class="a" style="left:410px;top:193px;width:1px;height:389px;background:#b8b8b8;"></div>
<div class="a" style="left:383px;top:193px;width:937px;height:389px;overflow:hidden">
<span id="t56" class="a t" style="top:2.04px;font:normal bold 10px/13px 'Liberation Sans', sans-serif;color:#006400;left:-174.5px;width:200px;text-align:right;-webkit-text-stroke:0.35px #006400;">2</span>
<span id="t57" class="a t" style="top:0.80px;font:normal normal 12px/16px 'Liberation Mono', monospace;color:#000;left:34.80000000000001px;letter-spacing:-0.2px;white-space:pre;"><b style="color:#000080">import</b>&nbsp;java.net.DatagramSocket;</span>
<span id="t58" class="a t" style="top:17.04px;font:normal bold 10px/13px 'Liberation Sans', sans-serif;color:#006400;left:-174.5px;width:200px;text-align:right;-webkit-text-stroke:0.35px #006400;">3</span>
<span id="t59" class="a t" style="top:15.80px;font:normal normal 12px/16px 'Liberation Mono', monospace;color:#000;left:34.80000000000001px;letter-spacing:-0.2px;white-space:pre;"><b style="color:#000080">import</b>&nbsp;java.net.InetSocketAddress;</span>
<span id="t60" class="a t" style="top:32.03px;font:normal bold 10px/13px 'Liberation Sans', sans-serif;color:#006400;left:-174.5px;width:200px;text-align:right;-webkit-text-stroke:0.35px #006400;">4</span>
<span id="t61" class="a t" style="top:30.80px;font:normal normal 12px/16px 'Liberation Mono', monospace;color:#000;left:34.80000000000001px;letter-spacing:-0.2px;white-space:pre;"><b style="color:#000080">import</b>&nbsp;java.util.Date;</span>
<span id="t62" class="a t" style="top:47.03px;font:normal bold 10px/13px 'Liberation Sans', sans-serif;color:#006400;left:-174.5px;width:200px;text-align:right;-webkit-text-stroke:0.35px #006400;">5</span>
<span id="t63" class="a t" style="top:62.03px;font:normal bold 10px/13px 'Liberation Sans', sans-serif;color:#006400;left:-174.5px;width:200px;text-align:right;-webkit-text-stroke:0.35px #006400;">6</span>
<span id="t64" class="a t" style="top:60.80px;font:normal normal 12px/16px 'Liberation Mono', monospace;color:#000;left:34.80000000000001px;letter-spacing:-0.2px;white-space:pre;"><b style="color:#000080">import</b>&nbsp;ru.bitel.bgbilling.kernel.wifi.common.IpInfo;</span>
<span id="t65" class="a t" style="top:77.03px;font:normal bold 10px/13px 'Liberation Sans', sans-serif;color:#006400;left:-174.5px;width:200px;text-align:right;-webkit-text-stroke:0.35px #006400;">7</span>
<span id="t66" class="a t" style="top:75.80px;font:normal normal 12px/16px 'Liberation Mono', monospace;color:#000;left:34.80000000000001px;letter-spacing:-0.2px;white-space:pre;"><b style="color:#000080">import</b>&nbsp;ru.bitel.bgbilling.kernel.wifi.common.WiFiPacket;</span>
<span id="t67" class="a t" style="top:92.03px;font:normal bold 10px/13px 'Liberation Sans', sans-serif;color:#006400;left:-174.5px;width:200px;text-align:right;-webkit-text-stroke:0.35px #006400;">8</span>
<span id="t68" class="a t" style="top:90.80px;font:normal normal 12px/16px 'Liberation Mono', monospace;color:#000;left:34.80000000000001px;letter-spacing:-0.2px;white-space:pre;"><b style="color:#000080">import</b>&nbsp;ru.bitel.bgbilling.kernel.wifi.common.WiFiUtil;</span>
<span id="t69" class="a t" style="top:107.03px;font:normal bold 10px/13px 'Liberation Sans', sans-serif;color:#006400;left:-174.5px;width:200px;text-align:right;-webkit-text-stroke:0.35px #006400;">9</span>
<span id="t70" class="a t" style="top:105.80px;font:normal normal 12px/16px 'Liberation Mono', monospace;color:#000;left:34.80000000000001px;letter-spacing:-0.2px;white-space:pre;"><b style="color:#000080">import</b>&nbsp;ru.bitel.bgbilling.modules.inet.access.sa.ServiceActivator;</span>
<span id="t71" class="a t" style="top:122.03px;font:normal bold 10px/13px 'Liberation Sans', sans-serif;color:#006400;left:-174.5px;width:200px;text-align:right;-webkit-text-stroke:0.35px #006400;">10</span>
<span id="t72" class="a t" style="top:120.80px;font:normal normal 12px/16px 'Liberation Mono', monospace;color:#000;left:34.80000000000001px;letter-spacing:-0.2px;white-space:pre;"><b style="color:#000080">import</b>&nbsp;ru.bitel.bgbilling.modules.inet.access.sa.ServiceActivatorAdapter;</span>
<span id="t73" class="a t" style="top:137.03px;font:normal bold 10px/13px 'Liberation Sans', sans-serif;color:#006400;left:-174.5px;width:200px;text-align:right;-webkit-text-stroke:0.35px #006400;">11</span>
<span id="t74" class="a t" style="top:135.80px;font:normal normal 12px/16px 'Liberation Mono', monospace;color:#000;left:34.80000000000001px;letter-spacing:-0.2px;white-space:pre;"><b style="color:#000080">import</b>&nbsp;ru.bitel.bgbilling.modules.inet.access.sa.ServiceActivatorEvent;</span>
<span id="t75" class="a t" style="top:152.03px;font:normal bold 10px/13px 'Liberation Sans', sans-serif;color:#006400;left:-174.5px;width:200px;text-align:right;-webkit-text-stroke:0.35px #006400;">12</span>
<span id="t76" class="a t" style="top:150.80px;font:normal normal 12px/16px 'Liberation Mono', monospace;color:#000;left:34.80000000000001px;letter-spacing:-0.2px;white-space:pre;"><b style="color:#000080">import</b>&nbsp;ru.bitel.bgbilling.modules.inet.api.common.AccessCodes;</span>
<span id="t77" class="a t" style="top:167.03px;font:normal bold 10px/13px 'Liberation Sans', sans-serif;color:#006400;left:-174.5px;width:200px;text-align:right;-webkit-text-stroke:0.35px #006400;">13</span>
<span id="t78" class="a t" style="top:165.80px;font:normal normal 12px/16px 'Liberation Mono', monospace;color:#000;left:34.80000000000001px;letter-spacing:-0.2px;white-space:pre;"><b style="color:#000080">import</b>&nbsp;ru.bitel.bgbilling.modules.inet.api.common.bean.InetConnection;</span>
<span id="t79" class="a t" style="top:182.03px;font:normal bold 10px/13px 'Liberation Sans', sans-serif;color:#006400;left:-174.5px;width:200px;text-align:right;-webkit-text-stroke:0.35px #006400;">14</span>
<span id="t80" class="a t" style="top:180.80px;font:normal normal 12px/16px 'Liberation Mono', monospace;color:#000;left:34.80000000000001px;letter-spacing:-0.2px;white-space:pre;"><b style="color:#000080">import</b>&nbsp;ru.bitel.bgbilling.modules.inet.api.common.bean.InetDevice;</span>
<span id="t81" class="a t" style="top:197.03px;font:normal bold 10px/13px 'Liberation Sans', sans-serif;color:#006400;left:-174.5px;width:200px;text-align:right;-webkit-text-stroke:0.35px #006400;">15</span>
<span id="t82" class="a t" style="top:195.80px;font:normal normal 12px/16px 'Liberation Mono', monospace;color:#000;left:34.80000000000001px;letter-spacing:-0.2px;white-space:pre;"><b style="color:#000080">import</b>&nbsp;ru.bitel.bgbilling.modules.inet.api.common.bean.InetDeviceType;</span>
<span id="t83" class="a t" style="top:212.03px;font:normal bold 10px/13px 'Liberation Sans', sans-serif;color:#006400;left:-174.5px;width:200px;text-align:right;-webkit-text-stroke:0.35px #006400;">16</span>
<span id="t84" class="a t" style="top:210.80px;font:normal normal 12px/16px 'Liberation Mono', monospace;color:#000;left:34.80000000000001px;letter-spacing:-0.2px;white-space:pre;"><b style="color:#000080">import</b>&nbsp;ru.bitel.bgbilling.server.util.Setup;</span>
<span id="t85" class="a t" style="top:227.03px;font:normal bold 10px/13px 'Liberation Sans', sans-serif;color:#006400;left:-174.5px;width:200px;text-align:right;-webkit-text-stroke:0.35px #006400;">17</span>
<span id="t86" class="a t" style="top:225.80px;font:normal normal 12px/16px 'Liberation Mono', monospace;color:#000;left:34.80000000000001px;letter-spacing:-0.2px;white-space:pre;"><b style="color:#000080">import</b>&nbsp;ru.bitel.common.ParameterMap;</span>
<span id="t87" class="a t" style="top:242.03px;font:normal bold 10px/13px 'Liberation Sans', sans-serif;color:#006400;left:-174.5px;width:200px;text-align:right;-webkit-text-stroke:0.35px #006400;">18</span>
<span id="t88" class="a t" style="top:240.80px;font:normal normal 12px/16px 'Liberation Mono', monospace;color:#000;left:34.80000000000001px;letter-spacing:-0.2px;white-space:pre;"><b style="color:#000080">import</b>&nbsp;ru.bitel.common.inet.IpAddress;</span>
<span id="t89" class="a t" style="top:257.04px;font:normal bold 10px/13px 'Liberation Sans', sans-serif;color:#006400;left:-174.5px;width:200px;text-align:right;-webkit-text-stroke:0.35px #006400;">19</span>
<span id="t90" class="a t" style="top:255.80px;font:normal normal 12px/16px 'Liberation Mono', monospace;color:#000;left:34.80000000000001px;letter-spacing:-0.2px;white-space:pre;"><b style="color:#000080">import</b>&nbsp;bitel.billing.common.IPUtils;</span>
<span id="t91" class="a t" style="top:272.04px;font:normal bold 10px/13px 'Liberation Sans', sans-serif;color:#006400;left:-174.5px;width:200px;text-align:right;-webkit-text-stroke:0.35px #006400;">20</span>
<span id="t92" class="a t" style="top:270.80px;font:normal normal 12px/16px 'Liberation Mono', monospace;color:#000;left:34.80000000000001px;letter-spacing:-0.2px;white-space:pre;"><b style="color:#000080">import</b>&nbsp;ru.bitel.bgbilling.kernel.wifi.common.WiFiPacketRecord;</span>
<span id="t93" class="a t" style="top:287.04px;font:normal bold 10px/13px 'Liberation Sans', sans-serif;color:#006400;left:-174.5px;width:200px;text-align:right;-webkit-text-stroke:0.35px #006400;">21</span>
<span id="t94" class="a t" style="top:302.04px;font:normal bold 10px/13px 'Liberation Sans', sans-serif;color:#006400;left:-174.5px;width:200px;text-align:right;-webkit-text-stroke:0.35px #006400;">22</span>
<span id="t95" class="a t" style="top:317.04px;font:normal bold 10px/13px 'Liberation Sans', sans-serif;color:#006400;left:-174.5px;width:200px;text-align:right;-webkit-text-stroke:0.35px #006400;">23</span>
<span id="t96" class="a t" style="top:315.80px;font:normal normal 12px/16px 'Liberation Mono', monospace;color:#000;left:34.80000000000001px;letter-spacing:-0.2px;white-space:pre;"><b style="color:#000080">public</b>&nbsp;<b style="color:#000080">class</b>&nbsp;WiFiServiceActivator</span>
<span id="t97" class="a t" style="top:332.04px;font:normal bold 10px/13px 'Liberation Sans', sans-serif;color:#006400;left:-174.5px;width:200px;text-align:right;-webkit-text-stroke:0.35px #006400;">24</span>
<span id="t98" class="a t" style="top:330.80px;font:normal normal 12px/16px 'Liberation Mono', monospace;color:#000;left:34.80000000000001px;letter-spacing:-0.2px;white-space:pre;">&nbsp;<b style="color:#000080">extends</b>&nbsp;ServiceActivatorAdapter</span>
<span id="t99" class="a t" style="top:347.04px;font:normal bold 10px/13px 'Liberation Sans', sans-serif;color:#006400;left:-174.5px;width:200px;text-align:right;-webkit-text-stroke:0.35px #006400;">25</span>
<span id="t100" class="a t" style="top:345.80px;font:normal normal 12px/16px 'Liberation Mono', monospace;color:#000;left:34.80000000000001px;letter-spacing:-0.2px;white-space:pre;">&nbsp;&nbsp;&nbsp;&nbsp;<b style="color:#000080">implements</b>&nbsp;ServiceActivator</span>
<span id="t101" class="a t" style="top:362.04px;font:normal bold 10px/13px 'Liberation Sans', sans-serif;color:#006400;left:-174.5px;width:200px;text-align:right;-webkit-text-stroke:0.35px #006400;">26</span>
<span id="t102" class="a t" style="top:360.80px;font:normal normal 12px/16px 'Liberation Mono', monospace;color:#000;left:34.80000000000001px;letter-spacing:-0.2px;white-space:pre;">{</span>
<span id="t103" class="a t" style="top:377.04px;font:normal bold 10px/13px 'Liberation Sans', sans-serif;color:#006400;left:-174.5px;width:200px;text-align:right;-webkit-text-stroke:0.35px #006400;">27</span>
<span id="t104" class="a t" style="top:375.80px;font:normal normal 12px/16px 'Liberation Mono', monospace;color:#000;left:34.80000000000001px;letter-spacing:-0.2px;white-space:pre;">&nbsp;&nbsp;&nbsp;&nbsp;<b style="color:#000080">private</b>&nbsp;DatagramSocket&nbsp;socket&nbsp;=&nbsp;<b style="color:#000080">null</b>;</span>
<span id="t105" class="a t" style="top:392.04px;font:normal bold 10px/13px 'Liberation Sans', sans-serif;color:#006400;left:-174.5px;width:200px;text-align:right;-webkit-text-stroke:0.35px #006400;">28</span>
<span id="t106" class="a t" style="top:390.80px;font:normal normal 12px/16px 'Liberation Mono', monospace;color:#000;left:34.80000000000001px;letter-spacing:-0.2px;white-space:pre;">&nbsp;&nbsp;&nbsp;&nbsp;<b style="color:#000080">private</b>&nbsp;</span>
</div>
<div class="a" style="left:1321px;top:193px;width:14px;height:389px;background:#cccccc;"></div>
<div class="a" style="left:1320px;top:193px;width:1px;height:389px;background:#666666;"></div>
<div class="a" style="left:1321px;top:193px;width:14px;height:1px;background:#ffffff;"></div>
<div class="a" style="left:1321px;top:193px;width:1px;height:15px;background:#ffffff;"></div>
<div class="a" style="left:1321px;top:208px;width:14px;height:1px;background:#666666;"></div>
<div class="a" style="left:1321px;top:566px;width:14px;height:1px;background:#666666;"></div>
<div class="a" style="left:1321px;top:567px;width:14px;height:1px;background:#ffffff;"></div>
<div class="a" style="left:1321px;top:567px;width:1px;height:14px;background:#ffffff;"></div>
<div class="a" style="left:1320px;top:581px;width:15px;height:1px;background:#666666;"></div>
<div class="a" style="left:1320px;top:211px;width:15px;height:71px;background:#9999cc;"></div>
<div class="a" style="left:1320px;top:211px;width:15px;height:1px;background:#666699;"></div>
<div class="a" style="left:1320px;top:281px;width:15px;height:1px;background:#666699;"></div>
<div class="a" style="left:1320px;top:211px;width:1px;height:71px;background:#666699;"></div>
<div class="a" style="left:1334px;top:211px;width:1px;height:71px;background:#666699;"></div>
<div class="a" style="left:1321px;top:212px;width:13px;height:1px;background:#ccccff;"></div>
<div class="a" style="left:1321px;top:212px;width:1px;height:69px;background:#ccccff;"></div>
<svg class="a" style="left:1323px;top:214px" width="10" height="66"><rect width="100%" height="100%" fill="url(#bump)"/></svg>
<div class="a" style="left:383px;top:583px;width:937px;height:14px;background:#cccccc;"></div>
<div class="a" style="left:383px;top:582px;width:937px;height:1px;background:#666666;"></div>
<div class="a" style="left:383px;top:583px;width:1px;height:14px;background:#ffffff;"></div>
<div class="a" style="left:383px;top:583px;width:15px;height:1px;background:#ffffff;"></div>
<div class="a" style="left:398px;top:583px;width:1px;height:14px;background:#666666;"></div>
<div class="a" style="left:1304px;top:583px;width:1px;height:14px;background:#666666;"></div>
<div class="a" style="left:1305px;top:583px;width:1px;height:14px;background:#ffffff;"></div>
<div class="a" style="left:1305px;top:583px;width:14px;height:1px;background:#ffffff;"></div>
<div class="a" style="left:1319px;top:582px;width:1px;height:15px;background:#666666;"></div>
<div class="a" style="left:399px;top:582px;width:867px;height:15px;background:#9999cc;"></div>
<div class="a" style="left:399px;top:582px;width:867px;height:1px;background:#666699;"></div>
<div class="a" style="left:399px;top:596px;width:867px;height:1px;background:#666699;"></div>
<div class="a" style="left:399px;top:582px;width:1px;height:15px;background:#666699;"></div>
<div class="a" style="left:1265px;top:582px;width:1px;height:15px;background:#666699;"></div>
<div class="a" style="left:400px;top:583px;width:865px;height:1px;background:#ccccff;"></div>
<div class="a" style="left:400px;top:583px;width:1px;height:13px;background:#ccccff;"></div>
<svg class="a" style="left:402px;top:585px" width="862" height="10"><rect width="100%" height="100%" fill="url(#bump)"/></svg>
<div class="a" style="left:1320px;top:582px;width:15px;height:15px;background:#cccccc;"></div>
<div class="a" style="left:382px;top:598px;width:955px;height:1px;background:#ffffff;"></div>
<div class="a" style="left:1336px;top:192px;width:1px;height:407px;background:#ffffff;"></div>
<div class="a" style="left:382px;top:192px;width:954px;height:1px;background:#666666;"></div>
<div class="a" style="left:382px;top:597px;width:954px;height:1px;background:#666666;"></div>
<div class="a" style="left:382px;top:192px;width:1px;height:406px;background:#666666;"></div>
<div class="a" style="left:1335px;top:192px;width:1px;height:406px;background:#666666;"></div>
<div class="a" style="left:382px;top:604px;width:743px;height:25px;background:#ffffff;"></div>
<div class="a" style="left:382px;top:628px;width:743px;height:1px;background:#ffffff;"></div>
<div class="a" style="left:1124px;top:604px;width:1px;height:25px;background:#ffffff;"></div>
<div class="a" style="left:382px;top:604px;width:742px;height:1px;background:#666666;"></div>
<div class="a" style="left:382px;top:627px;width:742px;height:1px;background:#666666;"></div>
<div class="a" style="left:382px;top:604px;width:1px;height:24px;background:#666666;"></div>
<div class="a" style="left:1123px;top:604px;width:1px;height:24px;background:#666666;"></div>
<div class="a" style="left:1130px;top:604px;width:77px;height:25px;background:#cccccc;"></div>
<div class="a" style="left:1131px;top:605px;width:76px;height:1px;background:#ffffff;"></div>
<div class="a" style="left:1131px;top:628px;width:76px;height:1px;background:#ffffff;"></div>
<div class="a" style="left:1131px;top:605px;width:1px;height:24px;background:#ffffff;"></div>
<div class="a" style="left:1206px;top:605px;width:1px;height:24px;background:#ffffff;"></div>
<div class="a" style="left:1130px;top:604px;width:76px;height:1px;background:#666666;"></div>
<div class="a" style="left:1130px;top:627px;width:76px;height:1px;background:#666666;"></div>
<div class="a" style="left:1130px;top:604px;width:1px;height:24px;background:#666666;"></div>
<div class="a" style="left:1205px;top:604px;width:1px;height:24px;background:#666666;"></div>
<span id="t107" class="a t" style="top:607.50px;font:normal bold 13px/17px 'Liberation Sans', sans-serif;color:#000;letter-spacing:1.008px;left:1168.0px;transform:translateX(-50%);">Найти</span>
<div class="a" style="left:1211px;top:604px;width:127px;height:25px;background:#cccccc;"></div>
<div class="a" style="left:1212px;top:605px;width:126px;height:1px;background:#ffffff;"></div>
<div class="a" style="left:1212px;top:628px;width:126px;height:1px;background:#ffffff;"></div>
<div class="a" style="left:1212px;top:605px;width:1px;height:24px;background:#ffffff;"></div>
<div class="a" style="left:1337px;top:605px;width:1px;height:24px;background:#ffffff;"></div>
<div class="a" style="left:1211px;top:604px;width:126px;height:1px;background:#666666;"></div>
<div class="a" style="left:1211px;top:627px;width:126px;height:1px;background:#666666;"></div>
<div class="a" style="left:1211px;top:604px;width:1px;height:24px;background:#666666;"></div>
<div class="a" style="left:1336px;top:604px;width:1px;height:24px;background:#666666;"></div>
<span id="t108" class="a t" style="top:607.50px;font:normal bold 13px/17px 'Liberation Sans', sans-serif;color:#000;letter-spacing:0.989px;left:1274.0px;transform:translateX(-50%);">Найти далее</span>
<span id="t109" class="a t" style="top:635.80px;font:normal bold 13px/17px 'Liberation Sans', sans-serif;color:#000;letter-spacing:0.563px;left:931.6px;">Строк:</span>
<span id="t110" class="a t" style="top:635.80px;font:normal bold 13px/17px 'Liberation Sans', sans-serif;color:#000;letter-spacing:1.248px;left:987.3px;">132</span>
<div class="a" style="left:1017px;top:640px;width:1px;height:12px;background:#222;"></div>
<span id="t111" class="a t" style="top:635.80px;font:normal bold 13px/17px 'Liberation Sans', sans-serif;color:#000;letter-spacing:0.974px;left:1024.7px;">Текущая строка:</span>
<span id="t112" class="a t" style="top:635.80px;font:normal bold 13px/17px 'Liberation Sans', sans-serif;color:#000;letter-spacing:1.731px;left:1154px;">14</span>
<div class="a" style="left:1177px;top:640px;width:1px;height:12px;background:#222;"></div>
<span id="t113" class="a t" style="top:635.80px;font:normal bold 13px/17px 'Liberation Sans', sans-serif;color:#000;letter-spacing:0.770px;left:1183.7px;">Текущий столбец:</span>
<span id="t114" class="a t" style="top:635.80px;font:normal bold 13px/17px 'Liberation Sans', sans-serif;color:#000;letter-spacing:1.031px;left:1321.6px;">67</span>
<div class="a" style="left:369px;top:681px;width:213px;height:26px;background:#cccccc;"></div>
<div class="a" style="left:370px;top:682px;width:212px;height:1px;background:#ffffff;"></div>
<div class="a" style="left:370px;top:706px;width:212px;height:1px;background:#ffffff;"></div>
<div class="a" style="left:370px;top:682px;width:1px;height:25px;background:#ffffff;"></div>
<div class="a" style="left:581px;top:682px;width:1px;height:25px;background:#ffffff;"></div>
<div class="a" style="left:369px;top:681px;width:212px;height:1px;background:#666666;"></div>
<div class="a" style="left:369px;top:705px;width:212px;height:1px;background:#666666;"></div>
<div class="a" style="left:369px;top:681px;width:1px;height:25px;background:#666666;"></div>
<div class="a" style="left:580px;top:681px;width:1px;height:25px;background:#666666;"></div>
<span id="t115" class="a t" style="top:685.00px;font:normal bold 13px/17px 'Liberation Sans', sans-serif;color:#000;letter-spacing:0.752px;left:476.0px;transform:translateX(-50%);">Сообщения компилятора</span>
<div class="a" style="left:891px;top:681px;width:109px;height:26px;background:#cccccc;"></div>
<div class="a" style="left:892px;top:682px;width:108px;height:1px;background:#ffffff;"></div>
<div class="a" style="left:892px;top:706px;width:108px;height:1px;background:#ffffff;"></div>
<div class="a" style="left:892px;top:682px;width:1px;height:25px;background:#ffffff;"></div>
<div class="a" style="left:999px;top:682px;width:1px;height:25px;background:#ffffff;"></div>
<div class="a" style="left:891px;top:681px;width:108px;height:1px;background:#666666;"></div>
<div class="a" style="left:891px;top:705px;width:108px;height:1px;background:#666666;"></div>
<div class="a" style="left:891px;top:681px;width:1px;height:25px;background:#666666;"></div>
<div class="a" style="left:998px;top:681px;width:1px;height:25px;background:#666666;"></div>
<span id="t116" class="a t" style="top:685.00px;font:normal bold 13px/17px 'Liberation Sans', sans-serif;color:#000;letter-spacing:0.674px;left:945.0px;transform:translateX(-50%);">Сохранить</span>
<div class="a" style="left:1009px;top:681px;width:242px;height:26px;background:#cccccc;"></div>
<div class="a" style="left:1010px;top:682px;width:241px;height:1px;background:#ffffff;"></div>
<div class="a" style="left:1010px;top:706px;width:241px;height:1px;background:#ffffff;"></div>
<div class="a" style="left:1010px;top:682px;width:1px;height:25px;background:#ffffff;"></div>
<div class="a" style="left:1250px;top:682px;width:1px;height:25px;background:#ffffff;"></div>
<div class="a" style="left:1009px;top:681px;width:241px;height:1px;background:#666666;"></div>
<div class="a" style="left:1009px;top:705px;width:241px;height:1px;background:#666666;"></div>
<div class="a" style="left:1009px;top:681px;width:1px;height:25px;background:#666666;"></div>
<div class="a" style="left:1249px;top:681px;width:1px;height:25px;background:#666666;"></div>
<span id="t117" class="a t" style="top:685.00px;font:normal bold 13px/17px 'Liberation Sans', sans-serif;color:#000;letter-spacing:0.573px;left:1129.5px;transform:translateX(-50%);">Сохранить и скомпилировать</span>
<div class="a" style="left:1260px;top:681px;width:92px;height:26px;background:#cccccc;"></div>
<div class="a" style="left:1261px;top:682px;width:91px;height:1px;background:#ffffff;"></div>
<div class="a" style="left:1261px;top:706px;width:91px;height:1px;background:#ffffff;"></div>
<div class="a" style="left:1261px;top:682px;width:1px;height:25px;background:#ffffff;"></div>
<div class="a" style="left:1351px;top:682px;width:1px;height:25px;background:#ffffff;"></div>
<div class="a" style="left:1260px;top:681px;width:91px;height:1px;background:#666666;"></div>
<div class="a" style="left:1260px;top:705px;width:91px;height:1px;background:#666666;"></div>
<div class="a" style="left:1260px;top:681px;width:1px;height:25px;background:#666666;"></div>
<div class="a" style="left:1350px;top:681px;width:1px;height:25px;background:#666666;"></div>
<span id="t118" class="a t" style="top:685.00px;font:normal bold 13px/17px 'Liberation Sans', sans-serif;color:#000;letter-spacing:0.797px;left:1305.5px;transform:translateX(-50%);">Run (F9)</span>
<div class="a" style="left:3px;top:716px;width:1362px;height:1px;background:#ffffff;"></div>
<svg class="a" style="left:0;top:700px" width="1366" height="43"><path d="M1364 19.5H284.5L282.5 21.5V37.5L281.5 38.5H3" stroke="#666" fill="none"/><path d="M1.5 19V38" stroke="#fff"/><path d="M0 42.5H1366" stroke="#8a8a8a"/></svg>
<div class="a" style="left:6px;top:722px;width:16px;height:16px;background:#cccccc;"></div>
<div class="a" style="left:6px;top:722px;width:16px;height:1px;background:#ffffff;"></div>
<div class="a" style="left:6px;top:722px;width:1px;height:16px;background:#ffffff;"></div>
<div class="a" style="left:6px;top:737px;width:16px;height:1px;background:#a0a098;"></div>
<div class="a" style="left:21px;top:722px;width:1px;height:16px;background:#a0a098;"></div>
<svg class="a" style="left:9.0px;top:725.0px" width="10" height="10"><path d="M1.5 1.5l7 7M8.5 1.5l-7 7" stroke="#111" stroke-width="2.2" stroke-linecap="round"/></svg>
<span id="t119" class="a t" style="top:721.60px;font:normal bold 13px/17px 'Liberation Sans', sans-serif;color:#000;letter-spacing:0.886px;left:26.8px;">Управление динамическим кодом</span>
<svg class="a" style="left:0;top:0" width="1366" height="743"><path d="M1080.5 59L1090.5 59L1085.5 64z M331 115.5L335 111.5L339 115.5z M331 650L335 654L339 650z M24.5 663L20.5 667L24.5 671z M318 663L322 667L318 671z M1324 202.5L1328 198.5L1332 202.5z M1324 573L1328 577L1332 573z M392.5 586L388.5 590L392.5 594z M1311 586L1315 590L1311 594z" fill="#000"/></svg></body></html>
